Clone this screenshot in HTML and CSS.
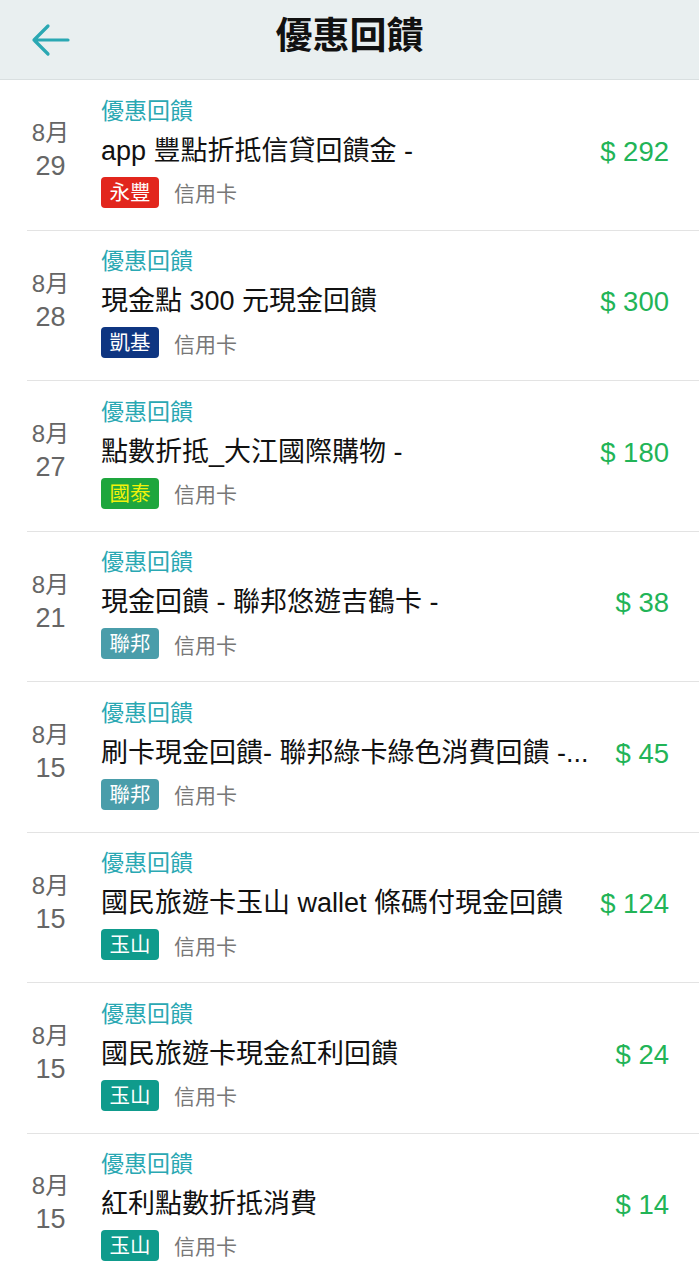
FILE: index.html
```html
<!DOCTYPE html>
<html lang="zh-Hant">
<head>
<meta charset="utf-8">
<title>優惠回饋</title>
<link rel="stylesheet" href="styles.css">
</head>
<body>
<header class="topbar">
  <a class="back" aria-label="返回">
    <svg width="40" height="34" viewBox="0 0 40 34"><path d="M3 17 H37 M17 3 L3 17 L17 31" fill="none" stroke="#2aa8b3" stroke-width="3.2" stroke-linecap="round" stroke-linejoin="round"/></svg>
  </a>
  <h1 class="title">優惠回饋</h1>
</header>
<main class="list">
  <div class="row">
    <div class="date"><span class="mon">8月</span><span class="day">29</span></div>
    <div class="main">
      <div class="cat">優惠回饋</div>
      <div class="name">app 豐點折抵信貸回饋金 -</div>
      <div class="tags"><span class="badge b-sinopac">永豐</span><span class="type">信用卡</span></div>
    </div>
    <div class="amt">$ 292</div>
  </div>
  <div class="row">
    <div class="date"><span class="mon">8月</span><span class="day">28</span></div>
    <div class="main">
      <div class="cat">優惠回饋</div>
      <div class="name">現金點 300 元現金回饋</div>
      <div class="tags"><span class="badge b-kgi">凱基</span><span class="type">信用卡</span></div>
    </div>
    <div class="amt">$ 300</div>
  </div>
  <div class="row">
    <div class="date"><span class="mon">8月</span><span class="day">27</span></div>
    <div class="main">
      <div class="cat">優惠回饋</div>
      <div class="name">點數折抵_大江國際購物 -</div>
      <div class="tags"><span class="badge b-cathay">國泰</span><span class="type">信用卡</span></div>
    </div>
    <div class="amt">$ 180</div>
  </div>
  <div class="row">
    <div class="date"><span class="mon">8月</span><span class="day">21</span></div>
    <div class="main">
      <div class="cat">優惠回饋</div>
      <div class="name">現金回饋 - 聯邦悠遊吉鶴卡 -</div>
      <div class="tags"><span class="badge b-ubot">聯邦</span><span class="type">信用卡</span></div>
    </div>
    <div class="amt">$ 38</div>
  </div>
  <div class="row">
    <div class="date"><span class="mon">8月</span><span class="day">15</span></div>
    <div class="main">
      <div class="cat">優惠回饋</div>
      <div class="name">刷卡現金回饋- 聯邦綠卡綠色消費回饋 -...</div>
      <div class="tags"><span class="badge b-ubot">聯邦</span><span class="type">信用卡</span></div>
    </div>
    <div class="amt">$ 45</div>
  </div>
  <div class="row">
    <div class="date"><span class="mon">8月</span><span class="day">15</span></div>
    <div class="main">
      <div class="cat">優惠回饋</div>
      <div class="name">國民旅遊卡玉山 wallet 條碼付現金回饋</div>
      <div class="tags"><span class="badge b-esun">玉山</span><span class="type">信用卡</span></div>
    </div>
    <div class="amt">$ 124</div>
  </div>
  <div class="row">
    <div class="date"><span class="mon">8月</span><span class="day">15</span></div>
    <div class="main">
      <div class="cat">優惠回饋</div>
      <div class="name">國民旅遊卡現金紅利回饋</div>
      <div class="tags"><span class="badge b-esun">玉山</span><span class="type">信用卡</span></div>
    </div>
    <div class="amt">$ 24</div>
  </div>
  <div class="row last">
    <div class="date"><span class="mon">8月</span><span class="day">15</span></div>
    <div class="main">
      <div class="cat">優惠回饋</div>
      <div class="name">紅利點數折抵消費</div>
      <div class="tags"><span class="badge b-esun">玉山</span><span class="type">信用卡</span></div>
    </div>
    <div class="amt">$ 14</div>
  </div>
</main>
</body>
</html>
```

FILE: styles.css
```css
* { box-sizing: border-box; }
html, body { margin: 0; padding: 0; }
body {
  width: 699px;
  background: #ffffff;
  font-family: "Liberation Sans", "Noto Sans CJK TC", sans-serif;
  color: #111;
  overflow: hidden;
}
.topbar {
  height: 80px;
  background: #e9eff0;
  border-bottom: 1px solid #d9dfe0;
  display: flex;
  align-items: center;
  justify-content: center;
  position: relative;
}
.back {
  position: absolute;
  left: 31px;
  top: 23px;
  display: flex;
}
.title {
  margin: 0 0 6px 0;
  font-size: 37px;
  font-weight: 700;
  color: #111;
  line-height: 44px;
}
.list { display: flex; flex-direction: column; }
.row {
  height: 150.5px;
  margin-left: 27px;
  border-bottom: 1px solid #e3e3e3;
  display: flex;
  align-items: center;
  padding-right: 30px;
}
.row.last {
  margin-left: 0;
  padding-left: 27px;
  border-bottom: 2px solid #cfcfcf;
}
.date {
  width: 47px;
  flex: none;
  display: flex;
  flex-direction: column;
  align-items: center;
  color: #666;
  padding-bottom: 10px;
}
.mon { font-size: 24px; line-height: 33px; }
.day { font-size: 27px; line-height: 34px; }
.main {
  flex: 1;
  min-width: 0;
  margin-left: 27px;
  display: flex;
  flex-direction: column;
  padding-bottom: 6px;
}
.cat {
  font-size: 23px;
  line-height: 30px;
  color: #2aa8b3;
}
.name {
  font-size: 27px;
  line-height: 50px;
  color: #111;
  white-space: nowrap;
  padding-right: 12px;
}
.tags {
  display: flex;
  align-items: center;
  margin-top: 1px;
}
.badge {
  display: inline-block;
  font-size: 20.5px;
  line-height: 31px;
  height: 31px;
  padding: 0 8.5px;
  border-radius: 4px;
  color: #fff;
}
.b-sinopac { background: #e2261d; }
.b-kgi { background: #0e3581; }
.b-cathay { background: #1ea63d; color: #f2f20a; }
.b-ubot { background: #4a9daa; }
.b-esun { background: #0f9b8c; }
.type {
  font-size: 21px;
  color: #777;
  margin-left: 15px;
}
.amt {
  flex: none;
  font-size: 27.5px;
  color: #22b457;
  text-align: right;
  padding-bottom: 6px;
}
```
